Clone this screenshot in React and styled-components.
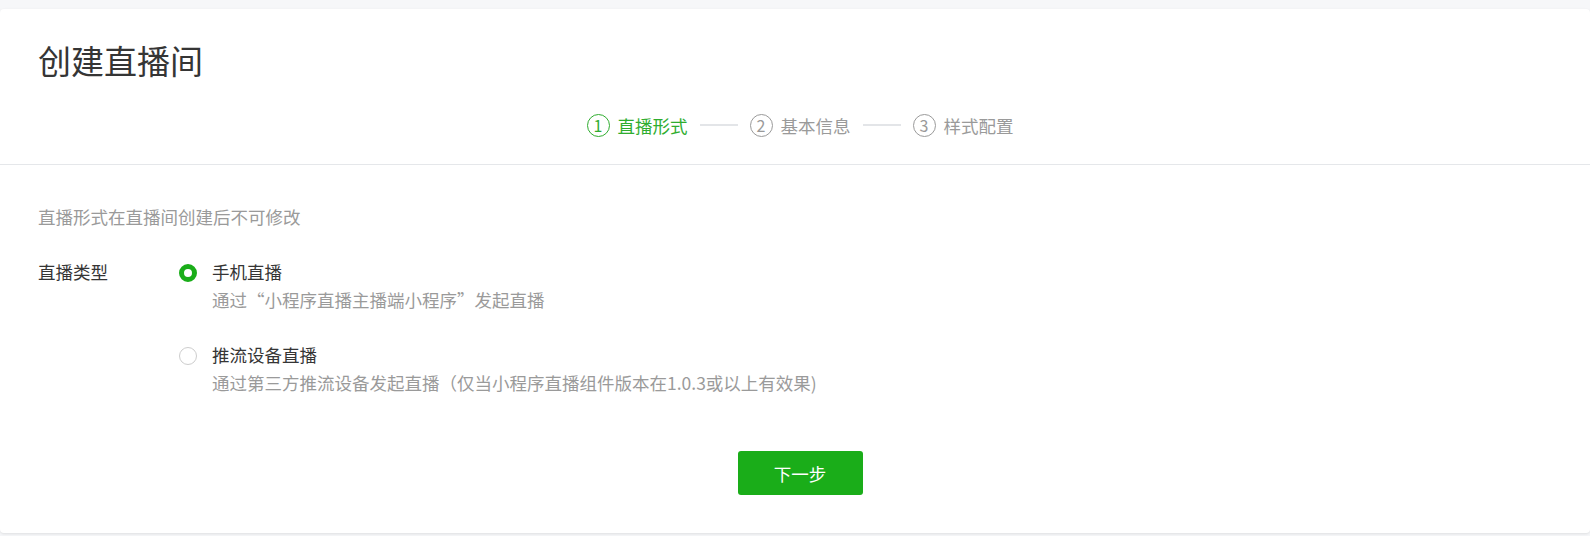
import styled, { createGlobalStyle } from "styled-components";
import { useState } from "react";

const GlobalStyle = createGlobalStyle`
  html, body {
    margin: 0;
    padding: 0;
    background: #f6f7f9;
    font-family: "Noto Sans CJK SC", "Noto Sans", sans-serif;
  }
`;

const Page = styled.div`
  padding-top: 9px;
  padding-bottom: 5px;
`;
const Card = styled.div`
  background: #fff;
  border-radius: 4px;
  box-shadow: 0 1px 3px rgba(0, 0, 0, 0.1);
`;
const Header = styled.div`
  padding: 27px 28px 27px 38px;
  border-bottom: 1px solid #e5e7ea;
`;
const Title = styled.h2`
  margin: 0;
  font-size: 33px;
  line-height: 48px;
  font-weight: 400;
  color: #353535;
`;
const Steps = styled.div`
  margin-top: 29px;
  display: flex;
  justify-content: center;
  align-items: center;
  gap: 12px;
  height: 24px;
`;
const Step = styled.div`
  display: flex;
  align-items: center;
  gap: 8px;
  font-size: 17.5px;
  color: ${(p) => (p.active ? "#2fad2f" : "#9a9a9a")};
`;
const StepNum = styled.span`
  width: 21px;
  height: 21px;
  border: 1px solid currentColor;
  border-radius: 50%;
  display: flex;
  align-items: center;
  justify-content: center;
  font-size: 16px;
  line-height: 1;
`;
const StepLine = styled.span`
  width: 38px;
  height: 2px;
  background: #e3e5e8;
`;
const Body = styled.div`
  padding: 40px 28px 38px 38px;
`;
const Hint = styled.p`
  margin: 0;
  font-size: 17.5px;
  line-height: 24px;
  color: #9a9a9a;
`;
const FormRow = styled.div`
  margin-top: 31px;
  display: flex;
`;
const Label = styled.div`
  width: 141px;
  flex-shrink: 0;
  font-size: 17.5px;
  line-height: 24px;
  color: #353535;
`;
const Options = styled.div`
  display: flex;
  flex-direction: column;
  gap: 31px;
`;
const Option = styled.label`
  display: flex;
  gap: 15px;
  cursor: pointer;
`;
const Radio = styled.span`
  margin-top: 4px;
  width: 18px;
  height: 18px;
  box-sizing: border-box;
  border-radius: 50%;
  flex-shrink: 0;
  border: ${(p) => (p.checked ? "5px solid #1aad19" : "1px solid #cdcdcd")};
  background: #fff;
`;
const OptionText = styled.div`
  display: flex;
  flex-direction: column;
  gap: 4px;
`;
const OptionTitle = styled.span`
  font-size: 17.5px;
  line-height: 24px;
  color: #353535;
`;
const OptionDesc = styled.span`
  font-size: 17.5px;
  line-height: 24px;
  color: #9a9a9a;
`;
const Footer = styled.div`
  margin-top: 56px;
  display: flex;
  justify-content: center;
`;
const NextButton = styled.button`
  width: 125px;
  height: 44px;
  border: none;
  border-radius: 3px;
  background: #1aad19;
  color: #fff;
  font-family: inherit;
  font-size: 17.5px;
  cursor: pointer;
`;

const steps = ["直播形式", "基本信息", "样式配置"];

const options = [
  { key: "phone", title: "手机直播", desc: "通过“小程序直播主播端小程序”发起直播" },
  {
    key: "push",
    title: "推流设备直播",
    desc: "通过第三方推流设备发起直播（仅当小程序直播组件版本在1.0.3或以上有效果)",
  },
];

const App = () => {
  const [type, setType] = useState("phone");

  return (
    <Page>
      <GlobalStyle />
      <Card>
        <Header>
          <Title>创建直播间</Title>
          <Steps>
            {steps.map((s, i) => (
              <>
                {i > 0 && <StepLine key={"l" + i} />}
                <Step key={s} active={i === 0}>
                  <StepNum>{i + 1}</StepNum>
                  {s}
                </Step>
              </>
            ))}
          </Steps>
        </Header>
        <Body>
          <Hint>直播形式在直播间创建后不可修改</Hint>
          <FormRow>
            <Label>直播类型</Label>
            <Options>
              {options.map((o) => (
                <Option key={o.key} onClick={() => setType(o.key)}>
                  <Radio checked={type === o.key} />
                  <OptionText>
                    <OptionTitle>{o.title}</OptionTitle>
                    <OptionDesc>{o.desc}</OptionDesc>
                  </OptionText>
                </Option>
              ))}
            </Options>
          </FormRow>
          <Footer>
            <NextButton>下一步</NextButton>
          </Footer>
        </Body>
      </Card>
    </Page>
  );
};

export default App;
